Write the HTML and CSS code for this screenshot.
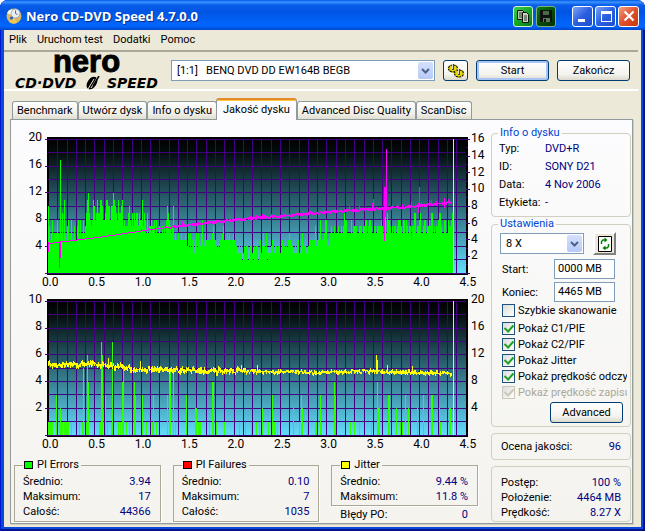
FILE: index.html
```html
<!DOCTYPE html>
<html lang="pl">
<head>
    <meta charset="UTF-8">
    <meta name="viewport" content="width=device-width, initial-scale=1.0">
    <title>Nero CD-DVD Speed 4.7.0.0</title>
    <link rel="stylesheet" href="styles.css">
</head>
<body>
<div class="window">
    <header class="titlebar">
        <svg class="app-icon" width="16" height="16" viewBox="0 0 16 16">
            <circle cx="8" cy="8" r="7.500" fill="#d8b860"/>
            <path d="M8 8 1 5A7.500 7.500 0 0 1 6 1Z" fill="#fff"/>
            <path d="M8 8l3 7a7.500 7.500 0 0 1-8-1Z" fill="#f0c850"/>
            <circle cx="9.500" cy="5.500" r="4.500" fill="#e8eef4" stroke="#98a8b8"/>
            <path d="M9.500 5.500V2.500M9.500 5.500l2 1" stroke="#668" fill="none"/>
            <circle cx="5.500" cy="10" r="1.500" fill="#2458c8"/>
        </svg>
        <h1>Nero CD-DVD Speed 4.7.0.0</h1>
        <div class="tool-buttons">
            <button class="cap green" aria-label="Kopiuj">
                <svg width="18" height="18" viewBox="0 0 18 18">
                    <path d="M3.500 3.500h5l2 2v7h-7z" fill="#b8c8b0" stroke="#111"/>
                    <path d="M5 6h3M5 8h3M5 10h3" stroke="#333"/>
                    <path d="M8.500 5.500h4l2 2v8h-6z" fill="#c8d8c0" stroke="#111"/>
                    <path d="M10 9h3M10 11h3M10 13h3" stroke="#333"/>
                </svg>
            </button>
            <button class="cap dark" aria-label="Zapisz">
                <svg width="18" height="18" viewBox="0 0 18 18">
                    <path d="M3 3h12v12H4l-1-1z" fill="#111"/>
                    <path d="M6 4h6v4H6z" fill="#4a6a4a"/>
                    <path d="M6 11h7v4H6z" fill="#5a7a5a"/>
                    <path d="M7 12h2v3H7z" fill="#111"/>
                </svg>
            </button>
        </div>
        <div class="caption-buttons">
            <button class="cap blue" aria-label="Minimalizuj">
                <svg width="18" height="18" viewBox="0 0 18 18"><path d="M4 12h7v3H4z" fill="#fff"/></svg>
            </button>
            <button class="cap blue" aria-label="Maksymalizuj">
                <svg width="18" height="18" viewBox="0 0 18 18"><path d="M4 4h11v11H4zM5 7v7h9V7z" fill="#fff" fill-rule="evenodd"/></svg>
            </button>
            <button class="cap red" aria-label="Zamknij">
                <svg width="18" height="18" viewBox="0 0 18 18"><path d="M4.500 4.500l9 9M13.500 4.500l-9 9" stroke="#fff" stroke-width="2.200"/></svg>
            </button>
        </div>
    </header>

    <div class="client">
        <nav class="menu">
            <a href="#">Plik</a>
            <a href="#">Uruchom test</a>
            <a href="#">Dodatki</a>
            <a href="#">Pomoc</a>
        </nav>

        <div class="toolbar">
            <div class="logo">
                <span class="logo-nero">nero</span>
                <span class="logo-speed">
                    <span>CD·DVD</span>
                    <svg width="20" height="14" viewBox="0 0 20 14">
                        <ellipse cx="10" cy="7" rx="4.500" ry="7" transform="rotate(35 10 7)" fill="#000"/>
                        <path d="M12 3L6 13M15 2L9 12" stroke="#ece9d8" stroke-width="1"/>
                        <path d="M17 0l-6 10" stroke="#000" stroke-width="1.500"/>
                    </svg>
                    <span>SPEED</span>
                </span>
            </div>
            <div class="combo drive">
                <select aria-label="Napęd">
                    <option>[1:1] &nbsp; BENQ DVD DD EW164B BEGB</option>
                </select>
                <span class="arrow"><svg width="9" height="6" viewBox="0 0 9 6"><path d="M1 1l3.500 3.500L8 1" fill="none" stroke="#4d6185" stroke-width="2"/></svg></span>
            </div>
            <button class="btn icon-btn" aria-label="Opcje">
                <svg width="18" height="16" viewBox="0 0 18 16">
                    <ellipse cx="6" cy="5.500" rx="4.500" ry="3.500" fill="#e8d800" stroke="#000" stroke-width="1.200"/>
                    <ellipse cx="12" cy="10.500" rx="4.500" ry="3.500" fill="#e8d800" stroke="#000" stroke-width="1.200"/>
                    <ellipse cx="6" cy="5.500" rx="4.500" ry="3.500" fill="none" stroke="#e8d800" stroke-width="1.500" stroke-dasharray="1 2"/>
                    <ellipse cx="12" cy="10.500" rx="4.500" ry="3.500" fill="none" stroke="#e8d800" stroke-width="1.500" stroke-dasharray="1 2"/>
                    <path d="M6 1v6M12 6v6" stroke="#444" stroke-width="2"/>
                    <path d="M5.500 1v5M11.500 6v5" stroke="#ddd"/>
                </svg>
            </button>
            <button class="btn default">Start</button>
            <button class="btn">Zakończ</button>
        </div>

        <div class="tabs" role="tablist">
            <button class="tab" role="tab">Benchmark</button>
            <button class="tab" role="tab">Utwórz dysk</button>
            <button class="tab" role="tab">Info o dysku</button>
            <button class="tab active" role="tab" aria-selected="true">Jakość dysku</button>
            <button class="tab" role="tab">Advanced Disc Quality</button>
            <button class="tab" role="tab">ScanDisc</button>
        </div>

        <main class="panel">
            <section class="charts">
                <div class="chart">
                    <div class="axis left">
                        <span>20</span><span>16</span><span>12</span><span>8</span><span>4</span>
                    </div>
                    <svg class="plot" id="errors" viewBox="0 0 421 138" preserveAspectRatio="none"></svg>
                    <div class="axis speed">
                        <span>16</span><span>14</span><span>12</span><span>10</span><span>8</span><span>6</span><span>4</span><span>2</span>
                    </div>
                    <div class="axis bottom">
                        <span>0.0</span><span>0.5</span><span>1.0</span><span>1.5</span><span>2.0</span><span>2.5</span><span>3.0</span><span>3.5</span><span>4.0</span><span>4.5</span>
                    </div>
                </div>
                <div class="chart">
                    <div class="axis left">
                        <span>10</span><span>8</span><span>6</span><span>4</span><span>2</span>
                    </div>
                    <svg class="plot" id="failures" viewBox="0 0 421 138" preserveAspectRatio="none"></svg>
                    <div class="axis right">
                        <span>20</span><span>16</span><span>12</span><span>8</span><span>4</span>
                    </div>
                    <div class="axis bottom">
                        <span>0.0</span><span>0.5</span><span>1.0</span><span>1.5</span><span>2.0</span><span>2.5</span><span>3.0</span><span>3.5</span><span>4.0</span><span>4.5</span>
                    </div>
                </div>

                <div class="stats">
                    <fieldset class="stat">
                        <legend><i class="key pie"></i>PI Errors</legend>
                        <dl>
                            <dt>Średnio:</dt><dd>3.94</dd>
                            <dt>Maksimum:</dt><dd>17</dd>
                            <dt>Całość:</dt><dd>44366</dd>
                        </dl>
                    </fieldset>
                    <fieldset class="stat">
                        <legend><i class="key pif"></i>PI Failures</legend>
                        <dl>
                            <dt>Średnio:</dt><dd>0.10</dd>
                            <dt>Maksimum:</dt><dd>7</dd>
                            <dt>Całość:</dt><dd>1035</dd>
                        </dl>
                    </fieldset>
                    <div class="stat-col">
                        <fieldset class="stat">
                            <legend><i class="key jitter"></i>Jitter</legend>
                            <dl>
                                <dt>Średnio:</dt><dd>9.44 %</dd>
                                <dt>Maksimum:</dt><dd>11.8 %</dd>
                            </dl>
                        </fieldset>
                        <dl class="po">
                            <dt>Błędy PO:</dt><dd>0</dd>
                        </dl>
                    </div>
                </div>
            </section>

            <aside class="side">
                <fieldset class="group info">
                    <legend>Info o dysku</legend>
                    <dl>
                        <dt>Typ:</dt><dd>DVD+R</dd>
                        <dt>ID:</dt><dd>SONY D21</dd>
                        <dt>Data:</dt><dd>4 Nov 2006</dd>
                        <dt>Etykieta:</dt><dd>-</dd>
                    </dl>
                </fieldset>

                <fieldset class="group settings">
                    <legend>Ustawienia</legend>
                    <div class="speed-row">
                        <div class="combo">
                            <select aria-label="Prędkość"><option>8 X</option></select>
                            <span class="arrow"><svg width="9" height="6" viewBox="0 0 9 6"><path d="M1 1l3.500 3.500L8 1" fill="none" stroke="#4d6185" stroke-width="2"/></svg></span>
                        </div>
                        <button class="refresh" aria-label="Odśwież">
                            <svg width="14" height="16" viewBox="0 0 14 16">
                                <path d="M.5.5h13v15H.5z" fill="#fff" stroke="#000"/>
                                <path d="M3.500 8V5.500L5 4h2M10.500 8v2.500L9 12H7" fill="none" stroke="#008000" stroke-width="1.400"/>
                                <path d="M6.500 1.500L9.500 4l-3 2.500zM7.500 9.500l-3 2.500 3 2.500z" fill="#008000"/>
                            </svg>
                        </button>
                    </div>
                    <div class="field">
                        <label for="start">Start:</label>
                        <input type="text" id="start" value="0000 MB">
                    </div>
                    <div class="field">
                        <label for="end">Koniec:</label>
                        <input type="text" id="end" value="4465 MB">
                    </div>
                    <div class="checks">
                        <label><input type="checkbox"><span>Szybkie skanowanie</span></label>
                        <label><input type="checkbox" checked><span>Pokaż C1/PIE</span></label>
                        <label><input type="checkbox" checked><span>Pokaż C2/PIF</span></label>
                        <label><input type="checkbox" checked><span>Pokaż Jitter</span></label>
                        <label><input type="checkbox" checked><span>Pokaż prędkość odczy</span></label>
                        <label class="off"><input type="checkbox" checked disabled><span>Pokaż prędkość zapisu</span></label>
                    </div>
                    <button class="btn advanced">Advanced</button>
                </fieldset>

                <div class="group score">
                    <dl><dt>Ocena jakości:</dt><dd>96</dd></dl>
                </div>

                <div class="group progress">
                    <dl>
                        <dt>Postęp:</dt><dd>100 %</dd>
                        <dt>Położenie:</dt><dd>4464 MB</dd>
                        <dt>Prędkość:</dt><dd>8.27 X</dd>
                    </dl>
                </div>
            </aside>
        </main>
    </div>
</div>
<script src="charts.js"></script>
</body>
</html>
```

FILE: styles.css
```css
* { box-sizing: border-box; }
body { margin: 0; background: #fff; color: #000; font: 11px/15px Roboto, "Liberation Sans", sans-serif; }
button, select, input { font: inherit; color: inherit; }
dl, dd, h1 { margin: 0; }

/* window frame */
.window { min-height: 100vh; display: flex; flex-direction: column; background: #0a48dc; border-radius: 8px 8px 0 0; padding: 0 4px 4px; box-shadow: inset 1px 0 #0019cf, inset -2px -2px #00138c; }
.titlebar { display: flex; align-items: center; height: 30px; margin: 0 -4px; padding: 2px 6px 0; border-radius: 8px 8px 0 0; background: linear-gradient(#0058e6 0, #3a93ff 2px, #0a5eea 5px, #0054e3 12px, #0062f8 22px, #0066ff 26px, #0046c8 30px); }
.titlebar h1 { flex: 1; margin-left: 4px; color: #fff; font: bold 13px/18px "Open Sans", "Noto Sans", sans-serif; text-shadow: 1px 1px #0a2a88; }
.tool-buttons, .caption-buttons { display: flex; gap: 2px; }
.tool-buttons { margin-right: 16px; gap: 3px; }
.cap { display: grid; place-items: center; width: 21px; height: 21px; padding: 0; border: 1px solid #fff; border-radius: 3px; }
.cap.blue { background: linear-gradient(135deg, #7fa2f4, #2a5fe0 50%, #1c4fd0); }
.cap.red { background: linear-gradient(135deg, #f0a088, #e0502c 50%, #c8380c); }
.cap.green { width: 20px; border-color: #d0f0d0; background: linear-gradient(135deg, #40d050, #10a020 60%, #088010); }
.cap.dark { width: 20px; border-color: #80b080; background: linear-gradient(135deg, #088010, #064808 60%, #043004); }

.client { flex: 1; display: flex; flex-direction: column; background: #ece9d8; padding-bottom: 3px; }
.menu { display: flex; gap: 10px; height: 20px; padding: 2px 5px; }
.menu a { color: #000; text-decoration: none; }

/* toolbar */
.toolbar { display: flex; align-items: center; gap: 8px; height: 41px; margin: 0 3px 0 0; padding: 0 8px 0 11px; border-top: 2px solid #aca899; border-bottom: 2px solid #aca899; border-image: linear-gradient(#aca899 50%, #fff 50%) 2; }
.logo { display: flex; flex-direction: column; align-items: center; width: 143px; margin-right: 5px; }
.logo-nero { font: bold 31px/20px "Liberation Sans", Arial, sans-serif; -webkit-text-stroke: 1px #000; padding-bottom: 4px; }
.logo-speed { display: flex; align-items: center; justify-content: space-between; width: 100%; font: italic bold 14px/12px "DejaVu Sans", sans-serif; }
.combo { position: relative; }
.combo.drive { flex: 1; }
.combo select { appearance: none; display: block; width: 100%; height: 21px; padding: 0 5px; border: 1px solid #7f9db9; border-radius: 0; background: #fff; }
.arrow { position: absolute; top: 2px; right: 2px; bottom: 2px; width: 15px; display: grid; place-items: center; border-radius: 2px; background: linear-gradient(#d4e0fd, #b6caf8); pointer-events: none; }
.btn { width: 73px; height: 21px; padding: 0; border: 1px solid #003c74; border-radius: 3px; background: linear-gradient(#fff, #f4f3ee 70%, #dcd8cc); }
.btn.default { box-shadow: inset 0 0 0 2px #a8c4f4; }
.icon-btn { display: grid; place-items: center; width: 25px; }

/* tabs */
.tabs { display: flex; align-items: flex-end; margin-top: 7px; padding-left: 8px; height: 21px; }
.tab { height: 18px; padding: 0 4px; border: 1px solid #919b9c; border-bottom: 0; border-radius: 3px 3px 0 0; background: linear-gradient(#fff, #f0efe8 70%, #e0ddd0); }
.tab.active { height: 22px; margin: 0 0 -1px -1px; padding: 0 6px 2px; border-top: 2px solid #e68b2c; box-shadow: inset 0 1px #ffc73c; background: #fcfcfe; z-index: 1; }
.panel { flex: 1; display: flex; margin: 0 8px 0 6px; border: 1px solid #919b9c; background: linear-gradient(#fcfcfe, #f4f3ee); box-shadow: 1px 1px #d0cebf; }

/* charts */
.charts { flex: 1; min-width: 0; padding-top: 17px; }
.chart { display: grid; grid-template-columns: 36px 1fr 23px; margin-bottom: 9px; font-size: 12px; }
.plot { display: block; width: 100%; height: 138px; overflow: visible; shape-rendering: crispEdges; }
.axis { display: flex; flex-direction: column; }
.axis.left, .axis.right { height: 138px; margin-top: -13px; line-height: 27px; }
.axis.left { padding-right: 5px; text-align: right; }
.axis.right, .axis.speed { padding-left: 3px; }
.axis.speed { height: 134px; margin-top: -6px; }
.axis.speed span { flex: 1; }
.axis.bottom { grid-column: 1 / -1; flex-direction: row; margin-left: 16px; text-align: center; }
.axis.bottom span { flex: 1; }

/* statistics */
.stats { display: grid; grid-template-columns: repeat(3, 1fr); gap: 12px; margin-top: -3px; padding: 0 13px 0 3px; }
fieldset { min-width: 0; margin: 0; padding: 0; }
.stat { border: 1px solid #aca899; padding: 2px 9px 1px 8px; box-shadow: 1px 1px #fff; }
.stat legend { display: flex; align-items: center; gap: 4px; padding: 0 2px 0 1px; line-height: 14px; }
.key { width: 9px; height: 8px; border: 1px solid #000; }
.pie { background: #0f0; }
.pif { background: #f00; }
.jitter { background: #ff0; }
dl { display: grid; grid-template-columns: auto 1fr; }
dd { color: #000080; text-align: right; }
.po { padding: 1px 10px 0 9px; }

/* right column */
.side { width: 141px; display: flex; flex-direction: column; padding: 6px 1px 1px 0; }
.group { border: 1px solid #d0d0bf; border-radius: 4px; }
.group legend { margin-left: 6px; padding: 0 2px; color: #0046d5; line-height: 14px; }
.info dl { grid-template-columns: 46px 1fr; padding: 0 0 4px 7px; line-height: 18px; }
.info dd { text-align: left; }
.settings { padding: 1px 3px 3px 8px; }
.settings legend { margin-left: -2px; }
.speed-row { display: flex; align-items: center; gap: 9px; margin-bottom: 4px; }
.speed-row .combo { width: 84px; }
.refresh { display: grid; place-items: center; width: 23px; height: 23px; padding: 0; border: 2px solid; border-color: #fff #808080 #808080 #fff; background: #ece9d8; }
.field { display: flex; align-items: center; justify-content: space-between; padding: 0 12px 0 2px; }
.field + .field { margin-top: 3px; }
.field input { width: 61px; height: 20px; padding: 0 3px 2px; border: 1px solid #7f9db9; background: #fff; }
.checks { display: flex; flex-direction: column; margin-left: 2px; }
.checks label { display: flex; align-items: center; gap: 3px; height: 16px; overflow: hidden; white-space: nowrap; }
.checks label:first-child { margin-bottom: 2px; }
.checks input { appearance: none; flex: none; display: grid; place-items: center; width: 13px; height: 13px; margin: 0; border: 1px solid #1c5180; background: linear-gradient(135deg, #dcdcd7, #fff); }
.checks input:checked::after { content: ""; width: 4px; height: 7px; margin-bottom: 2px; border: solid #21a121; border-width: 0 2px 2px 0; transform: rotate(42deg); }
.checks .off { color: #aca899; }
.checks .off input { border-color: #cac8bb; }
.checks .off input::after { border-color: #cac8bb; }
.advanced { display: block; margin: 2px 4px 0 auto; }
.score { margin-top: 6px; padding: 5px 9px; }
.progress { margin-top: 6px; padding: 8px 9px 1px; }
```

FILE: charts.js
```javascript
const BASE = 136;

// PI errors, one base-36 digit per column
const errors =
    "a756856668" + "65h695b657" + "8568547457" + "868568679b" + "c9878ba89b" +
    "99bba889bb" + "aa8aacba98" + "b99ab78777" + "9a87979899" + "7988b79869" +
    "6778778686" + "676676768a" + "98767a5655" + "6556555654" + "6363553563" +
    "6546854655" + "5455675543" + "4355675556" + "5654565443" + "343423434423" +
    "4432434523" + "5346436233" + "3455344344" + "3354434356" + "5443343453" +
    "3464453345" + "5454574556" + "8555688545" + "6766766676" + "6767988666" +
    "6867777667" + "7767788678" + "8766776777" + "7876796988" + "7676776788" +
    "8768868767" + "7577996778" + "9667886778" + "7996767789" + "9766886687" + "789";

// PI failures: [column, value]
const failures = [
    [0,1],[1,1],[2,1],[3,1],[4,1],[8,3],[11,1],[12,2],[13,1],[14,1],[16,1],[17,1],[18,1],[19,1],[20,1],[23,1],
    [31,1],[34,1],[35,5],[38,1],[39,6],[40,4],[51,1],[52,1],[53,7],[54,6],[57,3],[59,1],[63,1],[64,7],[70,1],[72,1],
    [74,4],[75,5],[78,1],[81,1],[86,4],[87,3],[94,3],[98,1],[104,1],[105,3],[108,1],[119,3],[121,5],[122,5],[125,5],
    [127,1],[138,3],[147,2],[148,2],[150,1],[151,1],[152,1],[161,1],[164,4],[165,4],[168,1],[176,1],[191,1],[197,1],
    [203,1],[208,1],[211,1],[214,2],[220,1],[224,3],[226,1],[227,1],[229,1],[245,2],[251,1],[253,3],[254,2],[259,1],
    [267,1],[268,1],[272,3],[273,1],[286,4],[287,3],[302,1],[306,1],[311,1],[323,1],[329,4],[330,2],[331,2],[340,3],
    [341,3],[348,2],[352,1],[354,1],[357,3],[360,2],[369,2],[375,3],[383,3],[384,3],[391,2],[392,1],[401,2],[402,2]
];

const speed = [[0,106],[9,105],[56,99],[103,92],[153,86],[202,81],[252,77],[302,73],[352,70],[404,65]];
const jitter = [[0,65],[20,66],[35,64],[60,66],[85,70],[110,70],[140,71],[202,72],[260,73],[325,72],[404,74]];

function noise(i) {
    const n = Math.sin(i * 127.1) * 43758.5453;
    return n - Math.floor(n);
}

function valueAt(points, x) {
    let i = 1;
    while (i < points.length - 1 && points[i][0] < x) i++;
    const [x0, y0] = points[i - 1];
    const [x1, y1] = points[i];
    return y0 + (y1 - y0) * (x - x0) / (x1 - x0);
}

function bar(x, top, bottom) {
    return `M${x} ${top}h1V${bottom}h-1z`;
}

function frame(id) {
    let s = `<defs><linearGradient id="${id}-bg" x1="0" y1="0" x2="0" y2="1">
        <stop offset="0" stop-color="#000"/><stop offset="0.1" stop-color="#040c0e"/><stop offset="1" stop-color="#62dcfc"/>
        </linearGradient></defs>
        <rect width="421" height="138" fill="#000"/>
        <rect x="2" y="2" width="417" height="134" fill="url(#${id}-bg)"/>`;
    let grid = "";
    for (let i = 1; i < 45; i++) grid += `M${Math.round(1 + i * 9.28)} 2h1v134h-1z`;
    for (let i = 0; i <= 10; i++) {
        const y = Math.round(2 + i * 13.35);
        grid += `M${i % 2 ? 1 : -2} ${y}H419v1H${i % 2 ? 1 : -2}z`;
    }
    return s + `<path d="${grid}" fill="#400080"/>`;
}

function drawErrors() {
    let bars = "", line = "", ticks = "";
    [...errors].forEach((c, x) => {
        bars += bar(x + 1, Math.round(BASE - parseInt(c, 36) * 6.67), BASE);
        const size = x < 90 ? 0 : x < 125 ? 1 : 2;
        const y = Math.round(valueAt(speed, x));
        const up = Math.round(noise(x) * size * (noise(x + 900) > 0.9 ? 2 : 0.7));
        const down = Math.round(noise(x + 500) * size * 0.7);
        if (x < 404) line += bar(x + 1, y - up, y + 1 + down);
    });
    // seek spikes in the read speed curve
    [[1,105,115],[12,104,131],[13,104,121],[326,62,72],[337,50,104],[338,50,80],[339,12,74],[372,50,68],[371,66,76],[397,61,71],[325,66,73]]
        .forEach(([x, top, bottom]) => line += bar(x, top, bottom));
    for (let i = 0; i <= 16; i++) ticks += `M419 ${Math.round(2 + i * 8.35)}h${i % 2 ? 2 : 4}v1h-${i % 2 ? 2 : 4}z`;
    document.getElementById("errors").innerHTML = frame("errors") +
        `<path d="${bars}" fill="#0f0"/><path d="${line}" fill="#f0f"/>
        <path d="${ticks}" fill="#400080"/><path d="M406 2h1v134h-1z" fill="#ddd"/>`;
}

function drawFailures() {
    let bars = "", line = "";
    failures.forEach(([x, v]) => bars += bar(x + 1, Math.round(BASE - v * 13.35), BASE));
    for (let x = 0; x < 404; x++) {
        const size = x < 200 ? 3 : 2;
        const y = Math.round(valueAt(jitter, x) + (noise(Math.floor(x / 2)) - 0.5) * size);
        line += bar(x + 1, y - Math.round(noise(x + 300) * size), y + 1 + Math.round(noise(x + 700) * size));
    }
    [[61,59,66],[93,62,70],[210,66,73],[329,56,73],[330,61,73],[340,66,73],[365,67,73],[194,66,72]]
        .forEach(([x, top, bottom]) => line += bar(x, top, bottom));
    document.getElementById("failures").innerHTML = frame("failures") +
        `<path d="${bars}" fill="#2dff00"/><path d="${line}" fill="#ff0"/>
        <path d="M406 2h1v134h-1z" fill="#ddd"/>`;
}

drawErrors();
drawFailures();
```
